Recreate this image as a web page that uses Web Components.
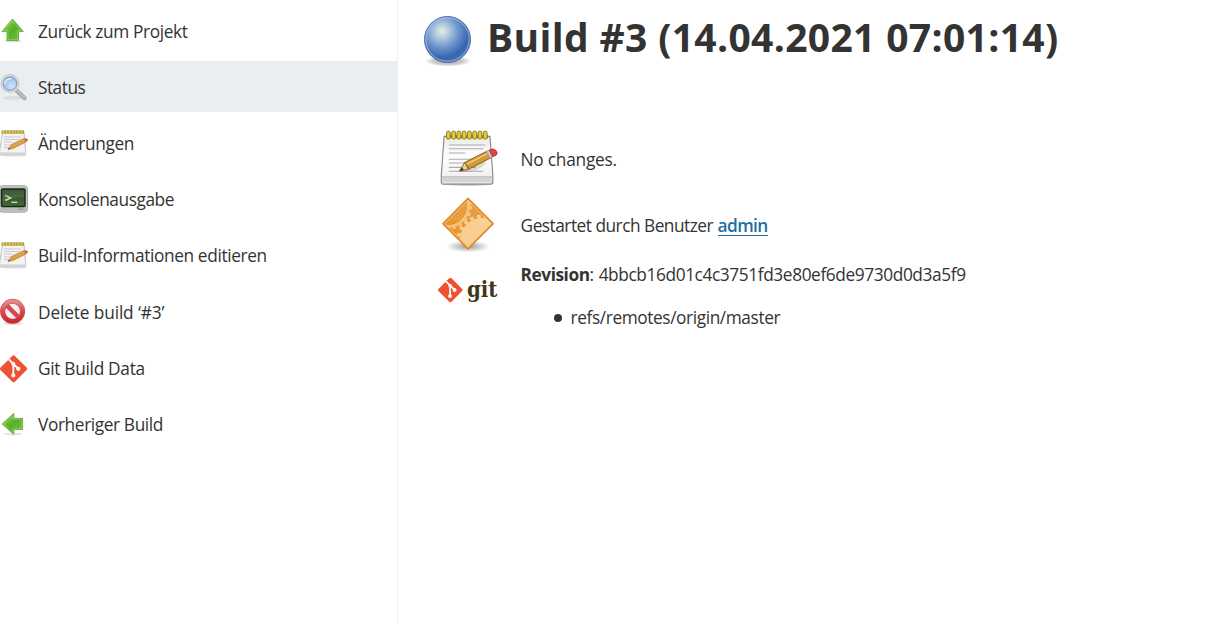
<!DOCTYPE html>
<html lang="de">
<head>
<meta charset="utf-8">
<title>Build #3</title>
<style>
html,body{margin:0;height:100%;overflow:hidden;background:#fff}
body{font:17.3px/24px "Open Sans","Noto Sans",sans-serif;color:#333}
</style>
</head>
<body>
<build-page></build-page>
<script>
const NOTEPAD = `
<ellipse cx="32" cy="57" rx="27" ry="3" fill="#000" opacity=".18"/>
<path d="M7 8h48l3 41v7q0 2-2 2H6q-2 0-2-2v-7z" fill="url(#paper)" stroke="#888a85" stroke-width="1.2"/>
<path d="M5 51h52v5H5z" fill="#d3d5d2"/><path d="M4.7 50.5h52.8" stroke="#aaa" stroke-width="1"/>
<path d="M9 7h44v3H9z" fill="#8d7b19"/>
<g fill="#e2cd3c" stroke="#8d7b19" stroke-width="1"><rect x="9.5" y="2.500" width="4" height="8.500" rx="2"/><rect x="15" y="2.500" width="4" height="8.500" rx="2"/><rect x="20.5" y="2.500" width="4" height="8.500" rx="2"/><rect x="26" y="2.500" width="4" height="8.500" rx="2"/><rect x="31.500" y="2.500" width="4" height="8.500" rx="2"/><rect x="37" y="2.500" width="4" height="8.500" rx="2"/><rect x="42.500" y="2.500" width="4" height="8.500" rx="2"/><rect x="48" y="2.500" width="4" height="8.500" rx="2"/></g>
<path d="M12 17h38M12 21h36M12 25.500h17M12 32h36M12 36h34M12 40.500h28M12 44.500h36" stroke="#a9aca9" stroke-width="1.100"/>
<path d="M23 45q18 2 28-9l-4-4z" fill="#000" opacity=".12"/>
<path d="M23 44.500l5.500-9 4 7z" fill="#ead2a1" stroke="#87601c" stroke-width="1"/>
<path d="M23 44.500l3-4 1.500 2.500z" fill="#333"/>
<path d="M28.500 35.500L52 23.500l4 7-23.500 12q-.2-4.500-4-7z" fill="#d09a3a" stroke="#8f5b12" stroke-width="1"/>
<path d="M30.500 37.200L53 25.600" stroke="#f0c776" stroke-width="1.700"/>
<path d="M51.200 23.900l3-1.500 3.700 6.900-3 1.600z" fill="#c4c6c3" stroke="#888" stroke-width=".6"/>
<path d="M54.200 22.400q4-2.500 6.800.2t.7 5l-3.800 2z" fill="#e0423f" stroke="#b32d2a" stroke-width=".8"/>
<defs><linearGradient id="paper" x2="0" y2="1"><stop stop-color="#e9eae8"/><stop offset=".4" stop-color="#fdfdfd"/><stop offset="1" stop-color="#eeeeec"/></linearGradient></defs>`;
const NOTE_SMALL = `
<ellipse cx="13" cy="26.300" rx="13.500" ry="1.300" fill="#000" opacity=".12"/>
<path d="M2.500 3H24l1.700 20v2.600H-.5V23z" fill="#f3f3f1" stroke="#b9bbb8" stroke-width=".9"/>
<path d="M-.5 23.300H25.700v2.300H-.5z" fill="#d5d6d8"/>
<path d="M1.500 1.300H24v3.500H1.500z" fill="#b5a545"/><path d="M3.500 1.300v3.500M6.500 1.300v3.500M9.500 1.300v3.500M12.500 1.300v3.500M15.500 1.300v3.500M18.500 1.300v3.500M21.500 1.300v3.500" stroke="#d8ca69" stroke-width="1.200"/>
<path d="M4 8h17M4 10.500h16M4 13h8M4 16h14M4 18.500h6" stroke="#c4c8cc" stroke-width=".9"/>
<path d="M8 20.500l3.500-5 12.500-6 1.800 3.600-12.600 6.300z" fill="#dba444" stroke="#ae7d35" stroke-width=".7"/><path d="M8 20.500l1.300-2 1 1.300z" fill="#555"/>
<path d="M24 9.500q2.500-1 3.500.7t-.5 2.400l-1.300.6z" fill="#d9615a"/>`;
const GIT = `<path d="M14 .8q.8 0 1.400.6l11.700 11.700q1.200 1.200 0 2.400L15.400 27.200q-1.200 1.200-2.500 0L1 15.500q-1.300-1.200 0-2.400L12.800 1.400Q13.300.8 14 .8z" fill="#f05133"/>
<path d="M9.300 4.800l4.500 4.500v11.800M14 9.500l4.800 4.700" stroke="#fff" stroke-width="1.900" fill="none"/><circle cx="13.700" cy="9.300" r="2" fill="#fff"/><circle cx="13.800" cy="21" r="2.100" fill="#fff"/><circle cx="18.800" cy="14.300" r="2.100" fill="#fff"/>`;
const ARROW_DEFS = `<defs><linearGradient id="green" x2="1" y2="1"><stop stop-color="#a4dc66"/><stop offset=".5" stop-color="#55b025"/><stop offset="1" stop-color="#76c046"/></linearGradient></defs>`;
const ICONS = {
up: ['0 .7 28 28', `<ellipse cx="13" cy="24.700" rx="9" ry="1.500" fill="#000" opacity=".1"/><path d="M12.500 2.700L23.300 15.300H18.500V24.300H7V15.300H2z" fill="url(#green)" stroke="#60a838" stroke-width=".9" stroke-linejoin="round"/><path d="M12.500 4.300L21 14.300H17.500V23.300H8V14.300H4z" fill="none" stroke="#c6efa0" stroke-width=".7" opacity=".5"/>${ARROW_DEFS}`],
left: ['0 0 28 28', `<ellipse cx="13" cy="24" rx="10" ry="1.500" fill="#000" opacity=".1"/><path d="M2.200 14L13.800 3.400V8.400H22.600V19.400H13.800V24.300z" fill="url(#green)" stroke="#60a838" stroke-width=".9" stroke-linejoin="round"/><path d="M3.800 14L12.900 5.600V9.300H21.700V18.500H12.900V22.200z" fill="none" stroke="#c6efa0" stroke-width=".7" opacity=".5"/>${ARROW_DEFS}`],
search: ['0 0 28 28', `<ellipse cx="14" cy="24.800" rx="11" ry="2" fill="#000" opacity=".07"/><path d="M16.500 17.500l8 7.500" stroke="#999b9c" stroke-width="4.200" stroke-linecap="round"/><path d="M16.800 17.600l7.600 7.100" stroke="#b9bbbb" stroke-width="2.700" stroke-linecap="round"/><circle cx="10" cy="10.600" r="8.200" fill="url(#lens)" stroke="#bbbec0" stroke-width="2.600"/><circle cx="10" cy="10.600" r="8.300" fill="none" stroke="#dee0e1" stroke-width="1.200"/><circle cx="10" cy="10.600" r="6.800" fill="none" stroke="#7b9cc8" stroke-width=".9"/><path d="M4.200 11q1-5.300 7-5.600" stroke="#fff" stroke-width="1.500" fill="none" opacity=".65"/><defs><radialGradient id="lens" cx=".6" cy=".65"><stop stop-color="#cfe5fd"/><stop offset="1" stop-color="#9bbdea"/></radialGradient></defs>`],
note: ['0 0 28 28', NOTE_SMALL],
notepad: ['-1.500 -.7 67 67', NOTEPAD],
terminal: ['0 0 28 28', `<rect x="-1" y=".7" width="28.500" height="26.500" rx="3.500" fill="#b9bbb6" stroke="#a4a6a2"/><rect x="0" y="1.700" width="26.500" height="24.500" rx="2.700" fill="none" stroke="#cdcecb" stroke-width=".8"/><rect x="1.500" y="4" width="23.500" height="17.500" rx="1" fill="url(#screen)" stroke="#1c2b18" stroke-width="1.500"/><path d="M2.300 4.800h22v7.500q-10 0-22 4z" fill="#fff" opacity=".11"/><path d="M5.300 10.300l5.200 2.600-5.200 2.600" stroke="#c4dcbb" stroke-width="1.500" fill="none"/><path d="M11.300 17.300h6" stroke="#c4dcbb" stroke-width="1.400"/><path d="M18 24.300h4" stroke="#858882"/><circle cx="23.800" cy="24.200" r=".8" fill="#71b52d"/><defs><linearGradient id="screen" x2="0" y2="1"><stop stop-color="#23411d"/><stop offset="1" stop-color="#476b38"/></linearGradient></defs>`],
stop: ['0 0 28 28', `<ellipse cx="13" cy="25.400" rx="10" ry="1.500" fill="#000" opacity=".12"/><circle cx="12.600" cy="13.300" r="10" fill="#f7eeee"/><circle cx="12.600" cy="13.300" r="10" fill="none" stroke="#cf5055" stroke-width="5"/><path d="M6 6.700L19.300 20" stroke="#c93a40" stroke-width="4.400"/><path d="M6 6.700L19.300 20" stroke="#d9484e" stroke-width="3.400"/><circle cx="12.600" cy="13.300" r="10" fill="none" stroke="url(#red)" stroke-width="3.900"/><defs><linearGradient id="red" x2="0" y2="1"><stop stop-color="#e58a8e"/><stop offset=".5" stop-color="#d9494f"/><stop offset="1" stop-color="#cd2a30"/></linearGradient></defs>`],
git: ['.5 -.5 28 28', GIT],
ball: ['0 0 56 56', `<ellipse cx="28" cy="49" rx="23" ry="5.500" fill="url(#shade)"/><circle cx="27.500" cy="27.500" r="23" fill="url(#blue)" stroke="#4b6ca6" stroke-width="1"/><circle cx="27.500" cy="27.500" r="21.700" fill="none" stroke="#b8cce8" stroke-width="1" opacity=".7"/><defs><radialGradient id="blue" cx=".38" cy=".32" r=".7"><stop stop-color="#e6eddc"/><stop offset=".18" stop-color="#bdd0df"/><stop offset=".48" stop-color="#739ace"/><stop offset=".82" stop-color="#3566ae"/><stop offset="1" stop-color="#4473b6"/></radialGradient><radialGradient id="shade"><stop stop-color="#000" stop-opacity=".4"/><stop offset=".7" stop-color="#000" stop-opacity=".18"/><stop offset="1" stop-color="#000" stop-opacity="0"/></radialGradient></defs>`],
gear: ['0 0 64 64', `<ellipse cx="32" cy="52.500" rx="22" ry="6" fill="url(#shade)"/><path d="M32 4.300L57.300 29.700 32 55 6.800 29.700z" fill="#e9952f"/><clipPath id="diamond"><path d="M32 5.500L56 29.700 32 54 8 29.700z"/></clipPath><g clip-path="url(#diamond)"><circle cx="46" cy="46" r="22" fill="#f9cf91"/><circle cx="46" cy="46" r="23.500" fill="none" stroke="#f9cf91" stroke-width="3.500" stroke-dasharray="3.500 3.500"/><circle cx="12" cy="12" r="20.500" fill="none" stroke="#f5c27a" stroke-width="2.500"/><circle cx="12" cy="12" r="22.500" fill="none" stroke="#f5c27a" stroke-width="3" stroke-dasharray="3.400 3.400"/><path d="M4 30L32 2l28 28q-28-8-56 0z" fill="#fff" opacity=".08"/></g><path d="M32 4.300L57.300 29.700 32 55 6.800 29.700z" fill="none" stroke="#da842a" stroke-width="1.300" stroke-linejoin="round"/><path d="M32 6.200L55.400 29.700 32 53.100 8.700 29.700z" fill="none" stroke="#f9bd6b" stroke-width="1"/><defs><radialGradient id="shade"><stop stop-color="#000" stop-opacity=".4"/><stop offset="1" stop-color="#000" stop-opacity="0"/></radialGradient></defs>`],
gitlogo: ['0 3 64 64', `<g transform="translate(1.500 20) scale(.91)">${GIT}</g><text x="31" y="39.500" font-family="DejaVu Serif" font-weight="700" font-size="22.500" textLength="30.500" lengthAdjust="spacingAndGlyphs" fill="#413718">git</text>`]
};
class UiIcon extends HTMLElement{
  connectedCallback(){
    const [box, art] = ICONS[this.getAttribute('name')];
    this.attachShadow({mode:'open'}).innerHTML = `<style>:host{display:block;flex:none;width:28px;height:28px}svg{display:block;width:100%;height:100%;overflow:visible}</style><svg viewBox="${box}" aria-hidden="true">${art}</svg>`;
  }
}
customElements.define('ui-icon', UiIcon);

/* Tracks its text so that the line takes the given width. */
class FitText extends HTMLElement{
  connectedCallback(){
    this.attachShadow({mode:'open'}).innerHTML = `<style>:host{display:inline-block;white-space:nowrap}</style><slot></slot>`;
    const gap = this.getAttribute('width') - this.getBoundingClientRect().width;
    this.style.letterSpacing = gap / this.textContent.length + 'px';
  }
}
customElements.define('fit-text', FitText);

class SideTask extends HTMLElement{
  connectedCallback(){
    this.attachShadow({mode:'open'}).innerHTML = `<style>
    :host{display:flex;align-items:center;height:51px;margin-bottom:5.220px;gap:10px}
    :host([active]){background:#e9eef1}
    ::slotted(*){padding-top:2px}
    </style><ui-icon name="${this.getAttribute('icon')}"></ui-icon><slot></slot>`;
  }
}
customElements.define('side-task', SideTask);

class SummaryRow extends HTMLElement{
  connectedCallback(){
    this.attachShadow({mode:'open'}).innerHTML = `<style>
    :host{display:flex;align-items:center;gap:20.600px;height:66px}
    ui-icon{width:64px;height:64px}
    ::slotted(*){flex:none}
    </style><ui-icon name="${this.getAttribute('icon')}"></ui-icon><slot></slot>`;
  }
}
customElements.define('summary-row', SummaryRow);

class BuildPage extends HTMLElement{
  connectedCallback(){
    this.attachShadow({mode:'open'}).innerHTML = `<style>
    :host{display:grid;grid-template-columns:398px 1fr;height:624px}
    nav{box-sizing:border-box;border-right:1px solid #edf0f2;padding-top:5px}
    header{display:flex;align-items:flex-start;gap:11px;padding:12px 0 0 22px;height:115px;box-sizing:border-box}
    header ui-icon{width:56px;height:56px}
    h1{margin:-1px 0 0;font-size:39px;line-height:52px;font-weight:700}
    .rows{padding:12px 0 0 38px}
    a{color:#1d6f9f;font-weight:600;text-decoration:none;display:inline-block;line-height:19px;border-bottom:1px solid #1d6f9f}
    ul{list-style:none;margin:19px 0 0 33px;padding:0}
    li{display:flex;align-items:center;gap:9px}
    li::before{content:"";width:8px;height:8px;border-radius:50%;background:#333}
    .rev{align-self:flex-start;padding-top:4px}
    </style>
    <nav>
      <side-task icon="up"><fit-text width="149.500">Zurück zum Projekt</fit-text></side-task>
      <side-task icon="search" active><fit-text width="47.200">Status</fit-text></side-task>
      <side-task icon="note"><fit-text width="96">Änderungen</fit-text></side-task>
      <side-task icon="terminal"><fit-text width="136">Konsolenausgabe</fit-text></side-task>
      <side-task icon="note"><fit-text width="228.800">Build-Informationen editieren</fit-text></side-task>
      <side-task icon="stop"><fit-text width="126.300">Delete build ‘#3’</fit-text></side-task>
      <side-task icon="git"><fit-text width="106.800">Git Build Data</fit-text></side-task>
      <side-task icon="left"><fit-text width="125">Vorheriger Build</fit-text></side-task>
    </nav>
    <main>
      <header><ui-icon name="ball"></ui-icon><h1><fit-text width="571.500">Build #3 (14.04.2021 07:01:14)</fit-text></h1></header>
      <div class="rows">
        <summary-row icon="notepad"><fit-text width="96.300">No changes.</fit-text></summary-row>
        <summary-row icon="gear"><div><fit-text width="192.500">Gestartet durch Benutzer</fit-text> <a href="#"><fit-text width="50">admin</fit-text></a></div></summary-row>
        <summary-row icon="gitlogo"><div class="rev"><div><b><fit-text width="69">Revision</fit-text></b>: <fit-text width="367">4bbcb16d01c4c3751fd3e80ef6de9730d0d3a5f9</fit-text></div><ul><li><fit-text width="209.500">refs/remotes/origin/master</fit-text></li></ul></div></summary-row>
      </div>
    </main>`;
  }
}
customElements.define('build-page', BuildPage);
</script>
</body>
</html>
